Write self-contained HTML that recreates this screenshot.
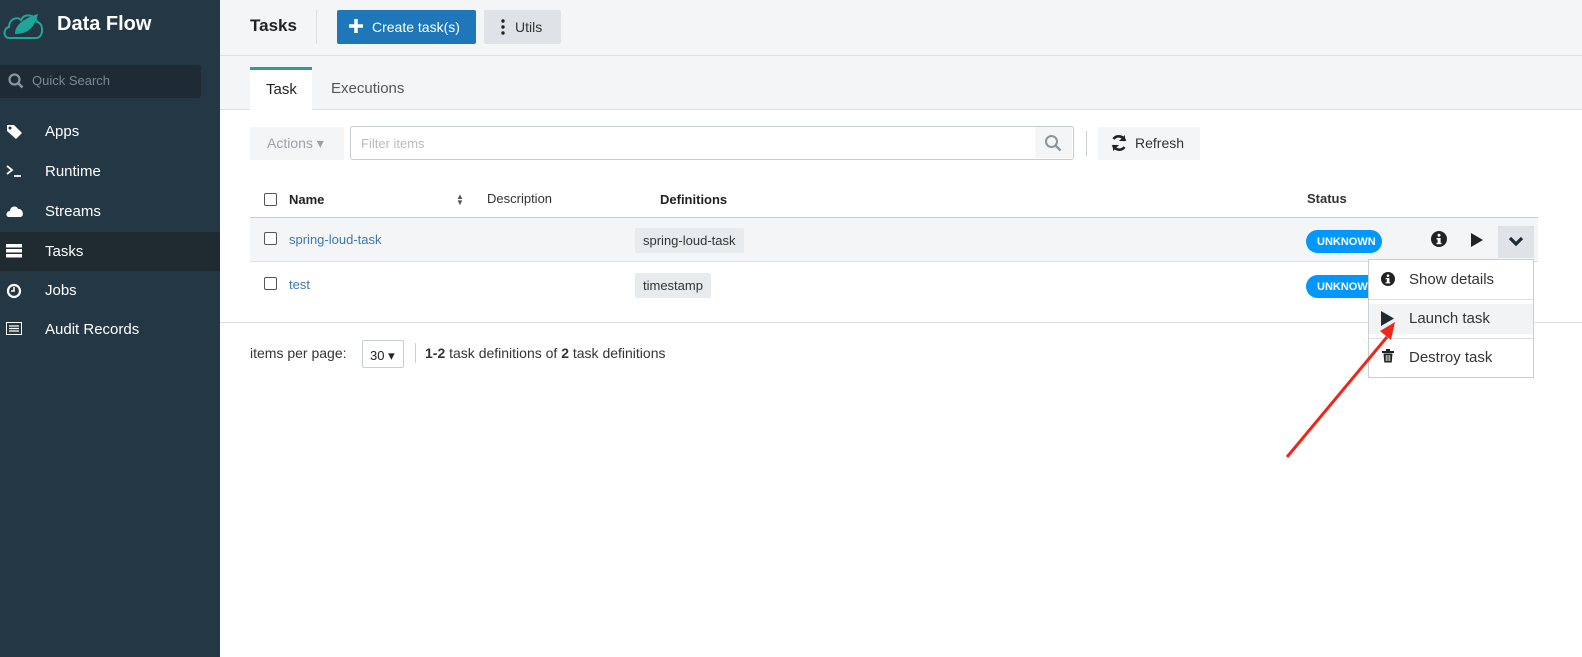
<!DOCTYPE html>
<html><head><meta charset="utf-8"><style>
*{box-sizing:border-box;margin:0;padding:0}
body{width:1582px;height:657px;overflow:hidden;font-family:"Liberation Sans",sans-serif;background:#fff;position:relative;color:#222}
.sb{position:absolute;left:0;top:0;width:220px;height:657px;background:#243745}
.logo{position:absolute;left:57px;top:13px;color:#fff;font-size:20px;font-weight:bold}
.qs{position:absolute;left:0;top:65px;width:201px;height:33px;background:#1f2b34;border-radius:0 3px 3px 0;color:#7d8890;font-size:13px;padding:8px 0 0 32px}
.nav{position:absolute;left:0;width:220px;height:39px;color:#fff;font-size:15px;padding:11px 0 0 45px}
.nav.act{background:#1f2a31}
.nav svg{position:absolute;left:6px;top:12px}
.hdr{position:absolute;left:220px;top:0;right:0;height:109px;background:#f4f5f7}
.hl{position:absolute;left:220px;right:0;height:1px;background:#dcdfe3}
.abs{position:absolute}
.btn{position:absolute;border-radius:2px;font-size:14px}
.tag{position:absolute;background:#e8ebee;border-radius:2px;font-size:13px;padding:5px 8px;color:#333}
.badge{position:absolute;background:#0098ff;color:#fff;font-size:11px;font-weight:bold;border-radius:12px;width:76px;height:23px;padding:6px 0 0 11px}
.cb{position:absolute;width:13px;height:13px;border:1.5px solid #555;border-radius:2px;background:#fff}
.menu{position:absolute;left:1368px;top:259px;width:166px;height:119px;background:#fff;border:1px solid #c9ced3}
.mi{position:absolute;left:0;width:164px;height:30px;font-size:15px;color:#333;padding:6px 0 0 40px}
</style></head><body>
<div class="sb">
 <svg class="abs" style="left:3px;top:10px" width="40" height="30" viewBox="0 0 40 30"><path d="M6 28 C0 28 0 18 6 17 C6 9 14 6 18 10 C21 3 32 4 34 12 C41 13 41 28 33 28 Z" fill="none" stroke="#1fa69a" stroke-width="2"/><path d="M12 24 C12 14 22 8 35 4 C32 16 26 24 12 24Z" fill="#1fa69a"/></svg>
 <div class="logo">Data Flow</div>
 <div class="qs"><svg class="abs" style="left:8px;top:8px" width="16" height="16" viewBox="0 0 16 16"><circle cx="6.5" cy="6.5" r="5" fill="none" stroke="#8b959c" stroke-width="2.2"/><path d="M10 10 L14.5 14.5" stroke="#8b959c" stroke-width="2.6"/></svg>Quick Search</div>
 <div class="nav" style="top:112px"><svg width="18" height="16" viewBox="0 0 18 16"><path d="M1 1h7l8 8-6 6-9-8z" fill="#fff"/><circle cx="4" cy="4" r="1.5" fill="#243745"/></svg>Apps</div>
 <div class="nav" style="top:152px"><svg width="18" height="14" viewBox="0 0 18 14"><path d="M1 2l5 4-5 4" stroke="#fff" stroke-width="1.8" fill="none"/><path d="M8 12h7" stroke="#fff" stroke-width="1.8"/></svg>Runtime</div>
 <div class="nav" style="top:192px"><svg width="18" height="14" viewBox="0 0 18 14"><path d="M3 13C-1 13 0 7 4 7 4 2 11 1 12 5 17 4 19 13 14 13z" fill="#fff"/></svg>Streams</div>
 <div class="nav act" style="top:232px"><svg width="16" height="14" viewBox="0 0 16 14"><rect x="0" y="0" width="16" height="3.5" fill="#fff"/><rect x="0" y="5" width="16" height="3.5" fill="#fff"/><rect x="0" y="10" width="16" height="3.5" fill="#fff"/></svg>Tasks</div>
 <div class="nav" style="top:271px"><svg width="16" height="16" viewBox="0 0 16 16"><circle cx="8" cy="8" r="6" stroke="#fff" stroke-width="2.2" fill="none"/><path d="M8 4v4h-3" stroke="#fff" stroke-width="1.6" fill="none"/></svg>Jobs</div>
 <div class="nav" style="top:310px"><svg width="16" height="14" viewBox="0 0 16 14"><rect x="0.5" y="0.5" width="15" height="12" fill="none" stroke="#fff"/><path d="M3 4h10M3 6.5h10M3 9h10" stroke="#fff" stroke-width="1.3"/></svg>Audit Records</div>
</div>
<div class="hdr"></div>
<div class="hl" style="top:55px"></div>
<div class="hl" style="top:109px"></div>
<div class="abs" style="left:250px;top:16px;font-size:17px;font-weight:bold;color:#222">Tasks</div>
<div class="abs" style="left:316px;top:10px;width:1px;height:34px;background:#dcdfe3"></div>
<div class="btn" style="left:337px;top:10px;width:139px;height:34px;background:#1d77b8;color:#fff;padding:9px 0 0 35px">Create task(s)</div>
<svg class="abs" style="left:349px;top:19px" width="14" height="14"><path d="M7 0v14M0 7h14" stroke="#fff" stroke-width="3.5"/></svg>
<div class="btn" style="left:484px;top:10px;width:77px;height:34px;background:#dfe3e7;color:#333;padding:9px 0 0 31px">Utils</div>
<svg class="abs" style="left:501px;top:19px" width="4" height="16"><circle cx="2" cy="2" r="1.7" fill="#222"/><circle cx="2" cy="8" r="1.7" fill="#222"/><circle cx="2" cy="14" r="1.7" fill="#222"/></svg>
<div class="abs" style="left:250px;top:67px;width:62px;height:43px;background:#fff;border-top:3px solid #2e9c8f;font-size:15px;padding:11px 0 0 16px">Task</div>
<div class="abs" style="left:331px;top:80px;font-size:15px;color:#555">Executions</div>
<div class="btn" style="left:250px;top:127px;width:94px;height:33px;background:#f4f5f6;color:#9aa2a9;padding:8px 0 0 17px">Actions ▾</div>
<div class="abs" style="left:350px;top:126px;width:724px;height:34px;border:1px solid #c6cbd0;border-radius:3px;font-size:13px;color:#b6bcc2;padding:9px 0 0 10px">Filter items</div>
<div class="abs" style="left:1035px;top:127px;width:37px;height:31px;background:#f4f5f6"></div>
<svg class="abs" style="left:1044px;top:134px" width="18" height="18"><circle cx="7.5" cy="7.5" r="5.5" fill="none" stroke="#8b959c" stroke-width="2"/><path d="M11.5 11.5l5 5" stroke="#8b959c" stroke-width="2.4"/></svg>
<div class="abs" style="left:1086px;top:131px;width:1px;height:25px;background:#c9ced3"></div>
<div class="btn" style="left:1098px;top:127px;width:102px;height:33px;background:#f4f5f6;color:#333;padding:8px 0 0 37px">Refresh</div>
<svg class="abs" style="left:1110px;top:134px" width="18" height="18" viewBox="0 0 18 18"><path d="M15 7A6.5 6.5 0 0 0 3.5 5" stroke="#222" stroke-width="2.6" fill="none"/><path d="M15 1v6h-6z" fill="#222"/><path d="M3 11A6.5 6.5 0 0 0 14.5 13" stroke="#222" stroke-width="2.6" fill="none"/><path d="M3 17v-6h6z" fill="#222"/></svg>
<div class="cb" style="left:264px;top:193px"></div>
<div class="abs" style="left:289px;top:192px;font-size:13px;font-weight:bold">Name</div>
<div class="abs" style="left:456px;top:194px;font-size:8px;color:#555;line-height:6px">▲<br>▼</div>
<div class="abs" style="left:487px;top:191px;font-size:13px;color:#333">Description</div>
<div class="abs" style="left:660px;top:192px;font-size:13px;font-weight:bold">Definitions</div>
<div class="abs" style="left:1307px;top:191px;font-size:13px;font-weight:bold;color:#333">Status</div>
<div class="abs" style="left:250px;top:217px;width:1288px;height:1px;background:#c9ced3"></div>
<div class="abs" style="left:250px;top:218px;width:1288px;height:44px;background:#f4f5f7;border-bottom:1px solid #dcdfe3"></div>
<div class="cb" style="left:264px;top:232px"></div>
<div class="abs" style="left:289px;top:232px;font-size:13px;color:#3b78b5">spring-loud-task</div>
<div class="tag" style="left:635px;top:228px">spring-loud-task</div>
<div class="badge" style="left:1306px;top:230px">UNKNOWN</div>
<svg class="abs" style="left:1431px;top:231px" width="16" height="16"><circle cx="8" cy="8" r="8" fill="#222"/><rect x="6.6" y="7" width="3" height="6" fill="#fff"/><circle cx="8" cy="4.3" r="1.5" fill="#fff"/><rect x="5.5" y="7" width="3" height="1.4" fill="#fff"/><rect x="5.5" y="11.8" width="5" height="1.4" fill="#fff"/></svg>
<svg class="abs" style="left:1470px;top:233px" width="14" height="14"><path d="M1 0l12 7-12 7z" fill="#222"/></svg>
<div class="abs" style="left:1498px;top:226px;width:36px;height:32px;background:#dfe3e7"></div>
<svg class="abs" style="left:1508px;top:236px" width="16" height="12"><path d="M2 2l6 6 6-6" stroke="#1f2a31" stroke-width="3.2" fill="none"/></svg>
<div class="cb" style="left:264px;top:277px"></div>
<div class="abs" style="left:289px;top:277px;font-size:13px;color:#3b78b5">test</div>
<div class="tag" style="left:635px;top:273px">timestamp</div>
<div class="badge" style="left:1306px;top:275px">UNKNOWN</div>
<div class="abs" style="left:220px;top:322px;width:1362px;height:1px;background:#dcdfe3"></div>
<div class="abs" style="left:250px;top:345px;font-size:14px;color:#333">items per page:</div>
<div class="abs" style="left:362px;top:340px;width:42px;height:28px;border:1px solid #c9ced3;border-radius:2px;font-size:13px;padding:7px 0 0 7px">30 ▾</div>
<div class="abs" style="left:415px;top:343px;width:1px;height:20px;background:#c9ced3"></div>
<div class="abs" style="left:425px;top:345px;font-size:14px;color:#333"><b>1-2</b> task definitions of <b>2</b> task definitions</div>
<div class="menu">
 <div class="mi" style="top:5px">Show details</div>
 <div style="position:absolute;left:0;top:39px;width:164px;height:1px;background:#dcdfe3"></div>
 <div class="mi" style="top:44px;background:#f2f3f4">Launch task</div>
 <div style="position:absolute;left:0;top:78px;width:164px;height:1px;background:#dcdfe3"></div>
 <div class="mi" style="top:83px">Destroy task</div>
 <svg style="position:absolute;left:12px;top:12px" width="14" height="14"><circle cx="7" cy="7" r="7" fill="#222"/><rect x="5.8" y="6" width="2.6" height="5" fill="#fff"/><circle cx="7" cy="3.7" r="1.3" fill="#fff"/><rect x="4.6" y="6" width="2.6" height="1.2" fill="#fff"/><rect x="4.6" y="10.2" width="4.6" height="1.2" fill="#fff"/></svg>
 <svg style="position:absolute;left:12px;top:51px" width="14" height="15"><path d="M0 0l13 7.5-13 7.5z" fill="#1f2a31"/></svg>
 <svg style="position:absolute;left:13px;top:89px" width="12" height="14"><rect x="0" y="2" width="12" height="2" fill="#222"/><rect x="4" y="0" width="4" height="2" fill="#222"/><path d="M1.5 4.5h9l-0.8 9h-7.4z" fill="#222"/><path d="M4.2 6v6M6 6v6M7.8 6v6" stroke="#fff" stroke-width="0.8"/></svg>
</div>
<svg class="abs" style="left:1280px;top:300px" width="130" height="165"><path d="M7 157 L107 37" stroke="#f0261c" stroke-width="3"/><path d="M115 22 L100 31 L111 40 Z" fill="#f0261c"/></svg>
</body></html>
